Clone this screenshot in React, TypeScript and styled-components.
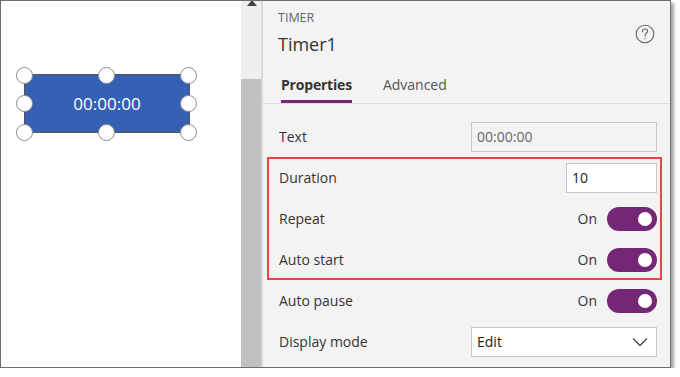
import React from "react";
import styled, { createGlobalStyle } from "styled-components";

const GlobalStyle = createGlobalStyle`
    html, body {
        margin: 0;
        padding: 0;
        background: #ffffff;
    }
    body {
        font-family: "Open Sans", "Noto Sans", sans-serif;
        color: #333333;
    }
`;

const Frame = styled.div`
    display: flex;
    flex-direction: row;
    width: 669px;
    height: 366px;
    border: 1px solid #6e6e6e;
    box-shadow: 3px 3px 3px rgba(0, 0, 0, 0.35);
    background: #ffffff;
    overflow: hidden;
`;

const Canvas = styled.div`
    position: relative;
    width: 240px;
    height: 100%;
    background: #ffffff;
`;

const TimerControl = styled.div`
    position: absolute;
    left: 23px;
    top: 73px;
    width: 164px;
    height: 57px;
    background: #3560b3;
    border: 1px solid #555555;
    display: flex;
    align-items: center;
    justify-content: center;
    color: #ffffff;
    font-size: 17px;
`;

const Handle = styled.span<{ $x: number; $y: number }>`
    position: absolute;
    left: ${(p) => p.$x - 8}px;
    top: ${(p) => p.$y - 8}px;
    width: 15px;
    height: 15px;
    border-radius: 50%;
    background: #ffffff;
    border: 1px solid #8a8a8a;
`;

const ScrollBar = styled.div`
    position: relative;
    display: flex;
    flex-direction: column;
    width: 20px;
    height: 100%;
    border-right: 2px solid #d9d9d9;
`;

const ScrollTrack = styled.div`
    height: 78px;
    background: #efefef;
`;

const ScrollThumb = styled.div`
    flex: 1;
    background: #c1c1c1;
`;

const ScrollArrow = styled.span`
    position: absolute;
    top: -1px;
    left: 6px;
    width: 0;
    height: 0;
    border-left: 5px solid transparent;
    border-right: 5px solid transparent;
    border-bottom: 6px solid #444444;
`;

const Panel = styled.div`
    flex: 1;
    display: flex;
    flex-direction: column;
    background: #f3f3f3;
`;

const Header = styled.div`
    display: flex;
    justify-content: space-between;
    padding: 0 15px 0 15px;
`;

const Kicker = styled.div`
    margin-top: 9px;
    font-size: 12.5px;
    line-height: 16px;
    color: #666666;
`;

const Title = styled.div`
    margin-top: 6px;
    font-size: 18px;
    line-height: 24px;
    color: #333333;
`;

const HelpButton = styled.div`
    margin-top: 23px;
    width: 20px;
    height: 20px;
`;

const Tabs = styled.div`
    display: flex;
    gap: 31px;
    margin-top: 19px;
    padding-left: 18px;
    border-bottom: 1px solid #dcdcdc;
`;

const Tab = styled.div<{ $active?: boolean }>`
    font-size: 14px;
    line-height: 20px;
    padding-bottom: 5px;
    font-weight: ${(p) => (p.$active ? 700 : 400)};
    letter-spacing: ${(p) => (p.$active ? "-0.2px" : "0")};
    color: ${(p) => (p.$active ? "#333333" : "#555555")};
    border-bottom: 3px solid ${(p) => (p.$active ? "#742774" : "transparent")};
`;

const Body = styled.div`
    display: flex;
    flex-direction: column;
    margin-top: 12px;
    padding: 0 13px 0 16px;
`;

const Highlight = styled.div`
    display: flex;
    flex-direction: column;
    margin: 0 -5px 0 -12px;
    padding: 0 5px 0 12px;
    box-shadow: inset 0 0 0 2px #e94448;
`;

const Row = styled.div`
    display: flex;
    align-items: center;
    justify-content: space-between;
    height: 41px;
`;

const Label = styled.span`
    font-size: 14px;
    color: #333333;
`;

const Field = styled.div<{ $width: number; $disabled?: boolean }>`
    box-sizing: border-box;
    display: flex;
    align-items: center;
    justify-content: space-between;
    width: ${(p) => p.$width}px;
    height: 30px;
    padding: 0 8px 0 5px;
    font-size: 14px;
    color: ${(p) => (p.$disabled ? "#666666" : "#222222")};
    background: ${(p) => (p.$disabled ? "#f3f3f3" : "#ffffff")};
    border: 1px solid #c8c8c8;
`;

const ToggleGroup = styled.div`
    display: flex;
    align-items: center;
    gap: 10px;
    font-size: 14px;
    color: #333333;
`;

const Toggle = styled.div`
    position: relative;
    width: 50px;
    height: 24px;
    border-radius: 12px;
    background: #742774;
`;

const Knob = styled.span`
    position: absolute;
    right: 5px;
    top: 5px;
    width: 14px;
    height: 14px;
    border-radius: 50%;
    background: #ffffff;
`;

const handles = [
    [0, 0], [82, 0], [164, 0],
    [0, 28], [164, 28],
    [0, 57], [82, 57], [164, 57],
];

const HelpIcon = () => (
    <svg width="20" height="20" viewBox="0 0 20 20" fill="none" stroke="#666666" strokeWidth="1.1">
        <circle cx="10" cy="10" r="8.8" />
        <path d="M7.4 7.6 C7.4 5.9 8.6 5 10 5 C11.5 5 12.6 5.9 12.6 7.3 C12.6 8.9 10.1 9.2 10.1 11.4 V12.2" strokeLinecap="round" />
        <circle cx="10.1" cy="14.6" r="0.7" fill="#666666" stroke="none" />
    </svg>
);

const Chevron = () => (
    <svg width="16" height="10" viewBox="0 0 16 10" fill="none" stroke="#444444" strokeWidth="1.3">
        <path d="M1 1.5 L8 8.5 L15 1.5" />
    </svg>
);

const OnToggle = () => (
    <ToggleGroup>
        On
        <Toggle>
            <Knob />
        </Toggle>
    </ToggleGroup>
);

export default function App() {
    return (
        <>
            <GlobalStyle />
            <Frame>
                <Canvas>
                    <TimerControl>00:00:00</TimerControl>
                    {handles.map(([x, y], i) => (
                        <Handle key={i} $x={23 + x} $y={74 + y} />
                    ))}
                </Canvas>
                <ScrollBar>
                    <ScrollArrow />
                    <ScrollTrack />
                    <ScrollThumb />
                </ScrollBar>
                <Panel>
                    <Header>
                        <div>
                            <Kicker>TIMER</Kicker>
                            <Title>Timer1</Title>
                        </div>
                        <HelpButton>
                            <HelpIcon />
                        </HelpButton>
                    </Header>
                    <Tabs>
                        <Tab $active>Properties</Tab>
                        <Tab>Advanced</Tab>
                    </Tabs>
                    <Body>
                        <Row>
                            <Label>Text</Label>
                            <Field $width={186} $disabled>00:00:00</Field>
                        </Row>
                        <Highlight>
                            <Row>
                                <Label>Duration</Label>
                                <Field $width={91}>10</Field>
                            </Row>
                            <Row>
                                <Label>Repeat</Label>
                                <OnToggle />
                            </Row>
                            <Row>
                                <Label>Auto start</Label>
                                <OnToggle />
                            </Row>
                        </Highlight>
                        <Row>
                            <Label>Auto pause</Label>
                            <OnToggle />
                        </Row>
                        <Row>
                            <Label>Display mode</Label>
                            <Field $width={186}>
                                Edit
                                <Chevron />
                            </Field>
                        </Row>
                    </Body>
                </Panel>
            </Frame>
        </>
    );
}
